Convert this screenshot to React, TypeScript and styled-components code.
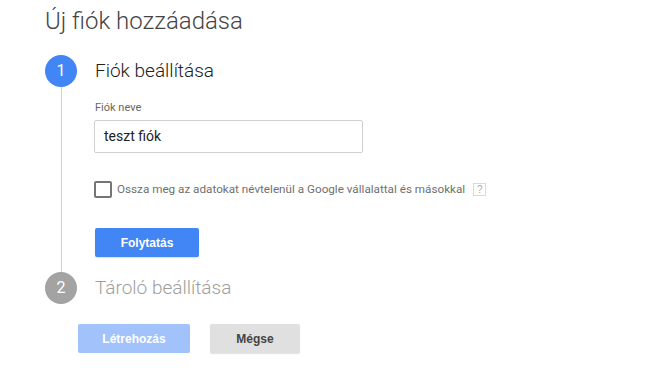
import styled, { createGlobalStyle } from "styled-components";

type StepState = {
  active: boolean;
};

type ActionKind = {
  kind: "primary" | "disabled" | "plain";
};

const GlobalStyle = createGlobalStyle`
  body {
    margin: 0;
    background: #fff;
    font-family: Roboto, "Liberation Sans", Arial, sans-serif;
  }
`;

const Page = styled.div`
  width: 660px;
  height: 370px;
  box-sizing: border-box;
  padding: 7px 0 0 45px;
  overflow: hidden;
`;

const Title = styled.h1`
  margin: 0 0 20px;
  font-size: 24px;
  line-height: 28px;
  font-weight: 300;
  color: #444;
`;

const Step = styled.div`
  display: grid;
  grid-template-columns: 32px 1fr;
  column-gap: 18px;
`;

const Rail = styled.div`
  display: flex;
  flex-direction: column;
  align-items: center;
`;

const Circle = styled.div<StepState>`
  width: 32px;
  height: 32px;
  flex: none;
  border-radius: 50%;
  background: ${(props) => (props.active ? "#4285f4" : "#a3a3a3")};
  color: #fff;
  font-size: 16px;
  line-height: 32px;
  text-align: center;
`;

const Line = styled.div`
  flex: 1;
  width: 1px;
  background: #cfcfcf;
`;

const StepBody = styled.div`
  padding-bottom: 15px;
`;

const StepTitle = styled.div<StepState>`
  font-size: 19px;
  font-weight: 300;
  line-height: 32px;
  color: ${(props) => (props.active ? "#212121" : "#9e9e9e")};
`;

const FieldLabel = styled.div`
  margin-top: 14px;
  font-size: 11px;
  line-height: 13px;
  color: #666;
`;

const TextInput = styled.div`
  margin-top: 6px;
  margin-left: -1px;
  width: 269px;
  height: 33px;
  box-sizing: border-box;
  border: 1px solid #d0d0d0;
  border-radius: 2px;
  padding: 0 9px;
  font-size: 14px;
  line-height: 31px;
  color: #222;
`;

const CheckRow = styled.div`
  margin-top: 27px;
  margin-left: -1px;
  display: flex;
  align-items: center;
  gap: 5px;
  height: 18px;
`;

const CheckBox = styled.div`
  width: 18px;
  height: 17px;
  box-sizing: border-box;
  border: 2px solid #757575;
  border-radius: 2px;
`;

const CheckLabel = styled.span`
  font-size: 11.7px;
  color: #707070;
`;

const HelpMark = styled.span`
  margin-left: 3px;
  width: 13px;
  height: 13px;
  box-sizing: border-box;
  border: 1px solid #d9d9d9;
  font-family: "Liberation Sans", Arial, sans-serif;
  font-size: 10px;
  line-height: 11px;
  text-align: center;
  color: #aaa;
`;

const Action = styled.button<ActionKind>`
  height: 29px;
  border: none;
  border-radius: 2px;
  padding: 0;
  font-family: "Liberation Sans", Arial, sans-serif;
  font-size: 12px;
  font-weight: bold;
  background: ${(props) =>
    props.kind === "primary"
      ? "#4285f4"
      : props.kind === "disabled"
        ? "#a1c2fa"
        : "#e0e0e0"};
  color: ${(props) => (props.kind === "plain" ? "#444" : "#fff")};
  box-shadow: ${(props) =>
    props.kind === "disabled" ? "none" : "0 1px 1px rgba(0,0,0,0.12)"};
`;

const ContinueButton = styled(Action)`
  margin-top: 30px;
  width: 104px;
`;

const Footer = styled.div`
  margin-top: 5px;
  padding-left: 33px;
  display: flex;
  gap: 20px;
`;

export default function App() {
  return (
    <>
      <GlobalStyle />
      <Page>
        <Title>Új fiók hozzáadása</Title>
        <Step>
          <Rail>
            <Circle active>1</Circle>
            <Line />
          </Rail>
          <StepBody>
            <StepTitle active>Fiók beállítása</StepTitle>
            <FieldLabel>Fiók neve</FieldLabel>
            <TextInput>teszt fiók</TextInput>
            <CheckRow>
              <CheckBox />
              <CheckLabel>
                Ossza meg az adatokat névtelenül a Google vállalattal és
                másokkal
              </CheckLabel>
              <HelpMark>?</HelpMark>
            </CheckRow>
            <ContinueButton kind="primary">Folytatás</ContinueButton>
          </StepBody>
        </Step>
        <Step>
          <Rail>
            <Circle active={false}>2</Circle>
          </Rail>
          <StepBody>
            <StepTitle active={false}>Tároló beállítása</StepTitle>
          </StepBody>
        </Step>
        <Footer>
          <Action kind="disabled" style={{ width: 112 }}>
            Létrehozás
          </Action>
          <Action kind="plain" style={{ width: 90 }}>
            Mégse
          </Action>
        </Footer>
      </Page>
    </>
  );
}
